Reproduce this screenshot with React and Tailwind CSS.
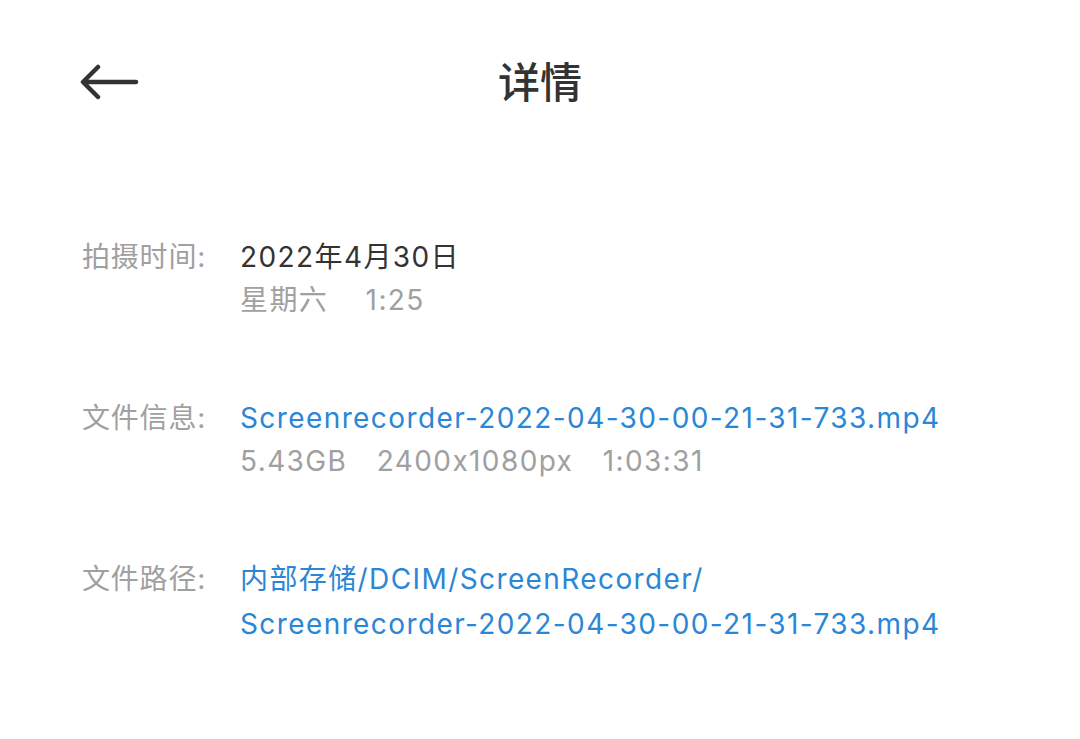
const Row = ({ label, children }) => (
  <div className="flex">
    <div className="w-[158px] shrink-0 text-[#a0a0a0] tracking-[0.8px]">{label}</div>
    <div className="flex flex-col tracking-[1.4px]">{children}</div>
  </div>
);

const App = () => {
  return (
    <div
      className="w-[1080px] h-[739px] bg-white overflow-hidden"
      style={{ fontFamily: 'Inter, "Noto Sans CJK SC", sans-serif' }}
    >
      <header className="relative h-[236px] flex justify-center pt-[54px]">
        <button className="absolute left-[80px] top-[62px]">
          <svg width="60" height="40" viewBox="0 0 60 40" fill="none" stroke="#333" strokeWidth="4.5" strokeLinecap="round" strokeLinejoin="round">
            <path d="M56 20H4M18 5L3 20l15 15" />
          </svg>
        </button>
        <h1 className="text-[42px] leading-[58px] text-[#333] font-medium">详情</h1>
      </header>
      <main className="pl-[82px] flex flex-col gap-[75px] text-[28px] leading-[43px]">
        <Row label="拍摄时间:">
          <span className="text-[#333]">2022年4月30日</span>
          <span className="text-[#a0a0a0]">
            星期六<span className="ml-[8px]">　1:25</span>
          </span>
        </Row>
        <Row label="文件信息:">
          <span className="text-[#2a86d6]">Screenrecorder-2022-04-30-00-21-31-733.mp4</span>
          <span className="text-[#a0a0a0]">5.43GB　2400x1080px　1:03:31</span>
        </Row>
        <Row label="文件路径:">
          <span className="text-[#2a86d6]">内部存储/DCIM/ScreenRecorder/</span>
          <span className="text-[#2a86d6] mt-[2px]">Screenrecorder-2022-04-30-00-21-31-733.mp4</span>
        </Row>
      </main>
    </div>
  );
};

export default App;
